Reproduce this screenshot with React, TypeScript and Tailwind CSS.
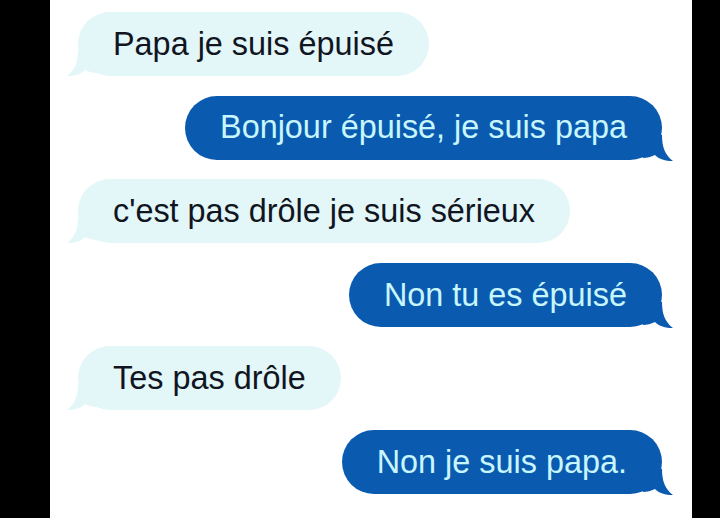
import React from "react";

type Msg = { text: string; mine: boolean };

const messages: Msg[] = [
  { text: "Papa je suis épuisé", mine: false },
  { text: "Bonjour épuisé, je suis papa", mine: true },
  { text: "c'est pas drôle je suis sérieux", mine: false },
  { text: "Non tu es épuisé", mine: true },
  { text: "Tes pas drôle", mine: false },
  { text: "Non je suis papa.", mine: true },
];

const Tail = ({ mine }: { mine: boolean }) => {
  // little iMessage style tail, sits over the bubble's bottom corner
  if (mine) {
    return (
      <svg
        className="absolute -right-[11px] bottom-[-1px]"
        width="30"
        height="26"
        viewBox="0 0 30 26"
      >
        <path
          d="M19 0 C19 12 22 20 30 26 C22 26 16 24 12 20 C8 22 4 23 0 23 L0 0 Z"
          fill="#0a5bb0"
        />
      </svg>
    );
  }
  return (
    <svg
      className="absolute -left-[11px] bottom-[0px]"
      width="30"
      height="26"
      viewBox="0 0 30 26"
    >
      <path
        d="M11 0 C11 12 8 20 0 26 C8 26 14 24 18 20 C22 22 26 23 30 23 L30 0 Z"
        fill="#e3f6f8"
      />
    </svg>
  );
};

const Bubble = ({ text, mine }: Msg) => (
  <div className={mine ? "self-end mr-[30px]" : "self-start ml-[28px]"}>
    <div
      className={
        mine
          ? "relative h-[64px] flex items-center px-[35px] rounded-[32px] bg-[#0a5bb0] text-[#c8f6fd]"
          : "relative h-[64px] flex items-center px-[35px] rounded-[32px] bg-[#e3f6f8] text-[#10151f]"
      }
    >
      <Tail mine={mine} />
      <span className="relative text-[32.4px] leading-none whitespace-nowrap">{text}</span>
    </div>
  </div>
);

export default function App() {
  return (
    <div className="w-[720px] h-[518px] bg-black flex overflow-hidden font-['Liberation_Sans',Arial,sans-serif]">
      <div className="ml-[50px] w-[642px] h-full bg-white flex flex-col pt-[12px] gap-[19.6px]">
        {messages.map((m, i) => (
          <Bubble key={i} text={m.text} mine={m.mine} />
        ))}
      </div>
    </div>
  );
}
